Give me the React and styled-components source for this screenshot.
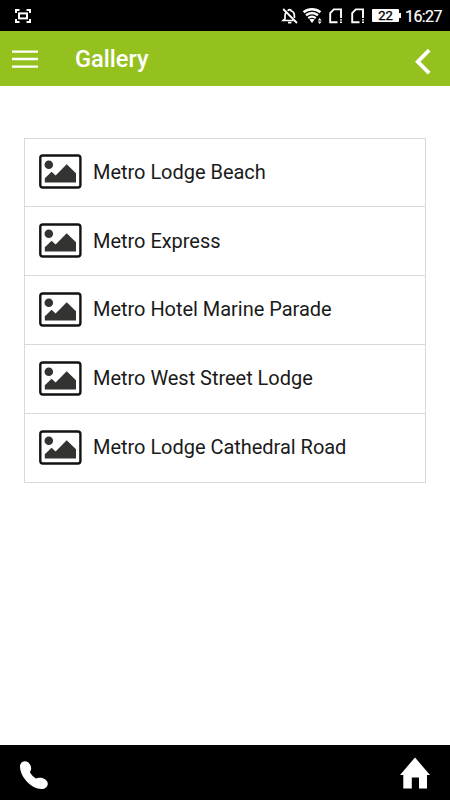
import React from "react";
import styled, { createGlobalStyle } from "styled-components";

const GlobalStyle = createGlobalStyle`
  * {
    box-sizing: border-box;
  }
  body {
    margin: 0;
    background: #ffffff;
    font-family: Roboto, sans-serif;
  }
  svg {
    display: block;
    overflow: visible;
  }
`
const SCREEN = styled.div`
  width: 450px;
  height: 800px;
  display: flex;
  flex-direction: column;
  background: #ffffff;
`
const STATUS = styled.div`
  height: 31px;
  padding: 0 8px 0 15px;
  display: flex;
  align-items: center;
  justify-content: space-between;
  background: #000000;
  color: #ffffff;
`
const STATUSICONS = styled.div`
  display: flex;
  align-items: center;
  height: 31px;
`
const SLOT = styled.div`
  margin-right: ${(props) => props.$gap}px;
`
const BATTERY = styled.div`
  width: 27px;
  height: 13px;
  border-radius: 1px;
  background: #ffffff;
  color: #000000;
  font-size: 13px;
  line-height: 14px;
  text-align: center;
  -webkit-text-stroke: 0.3px #000000;
`
const BATTERYTIP = styled.div`
  width: 2px;
  height: 5px;
  margin-right: 4px;
  background: #ffffff;
`
const CLOCK = styled.div`
  width: 37px;
  font-size: 16px;
  line-height: 18px;
  margin-top: 2px;
  white-space: nowrap;
  letter-spacing: -0.6px;
  -webkit-text-stroke: 0.2px #ffffff;
`
const HEADER = styled.div`
  height: 55px;
  padding: 0 19px 0 12px;
  display: flex;
  align-items: center;
  background: #95c11f;
  color: #ffffff;
`
const TITLE = styled.div`
  flex: 1;
  margin-left: 37px;
  font-size: 23.6px;
  font-weight: 500;
  line-height: 28px;
`
const CONTENT = styled.div`
  flex: 1;
  padding: 51.6px 24px 0;
`
const LIST = styled.div`
  border: 1px solid #d9d9d9;
`
const ROW = styled.div`
  height: 68.75px;
  padding: 0 0 1px 14px;
  display: flex;
  align-items: center;
  border-bottom: 1px solid #d9d9d9;
  &:last-child{
    height: 68px;
    border-bottom: none;
  }
`
const NAME = styled.span`
  margin-left: 11px;
  color: #1a1a1a;
  font-size: 20px;
  line-height: 24px;
  letter-spacing: -0.03px;
`
const FOOTER = styled.div`
  height: 55px;
  padding: 0 20px;
  display: flex;
  align-items: center;
  justify-content: space-between;
  background: #000000;
`

const places = [
  "Metro Lodge Beach",
  "Metro Express",
  "Metro Hotel Marine Parade",
  "Metro West Street Lodge",
  "Metro Lodge Cathedral Road",
];

function ScreenshotIcon(){
    return(
        <svg width="16" height="14" viewBox="0 0 16 14" fill="none" stroke="#fff" strokeWidth="2">
            <path d="M1 4V1H4.5M11.5 1H15V4M15 10V13H11.5M4.5 13H1V10" />
            <rect x="4" y="4.4" width="8" height="5" />
        </svg>
    )
}

function BellOffIcon(){
    return(
        <svg width="18" height="16" viewBox="0 0 18 16" fill="none" stroke="#fff" strokeWidth="1.7">
            <path d="M5.4 4.2C4.3 5.2 4 6.5 4 8V10.8L2.2 12.5H12.5M7 3C7.3 1.2 10 1.2 10.3 3C12.5 3.7 13.4 5.5 13.4 8V10" />
            <path d="M2.2 1L16 15" strokeWidth="1.8" />
            <path d="M7 14.6H10.4" strokeWidth="1.7" />
        </svg>
    )
}

function WifiIcon(){
    return(
        <svg width="20" height="16" viewBox="0 0 20 16" fill="none" stroke="#fff">
            <path d="M.6 4.2C5.6 0.2 12.4 0.2 17.4 4.2" strokeWidth="2.6" />
            <path d="M3 7.3C7 4.2 11 4.2 15 7.3" strokeWidth="2.4" />
            <path d="M5.2 10.1C8 8.1 10 8.1 12.8 10.1" strokeWidth="2.2" />
            <path d="M6.4 11.6Q9 10 11.6 11.6L9 15Z" fill="#fff" stroke="none" />
            <path d="M14.8 12.4L16.7 10L18.6 12.4ZM14.8 13.6H18.6L16.7 16Z" fill="#fff" stroke="none" />
        </svg>
    )
}

function SimIcon(){
    return(
        <svg width="14" height="16" viewBox="0 0 14 16" fill="none" stroke="#fff" strokeWidth="1.9">
            <path d="M8.5 14.2H1.2V5.2L4.8 1.4H12V10" />
            <path d="M12 11.2V12.6M12 13.4V15" strokeWidth="2" />
        </svg>
    )
}

function PictureIcon(){
    return(
        <svg width="43" height="35" viewBox="0 0 43 35">
            <rect x="1.3" y="1.5" width="40.1" height="32" rx="2.5" fill="#fff" stroke="#111311" strokeWidth="2.4" />
            <circle cx="9.8" cy="10.7" r="4.3" fill="#333331" />
            <path d="M5.8 28.6V24.3L12.6 17.8L16.6 21.5L27.7 10.2L37 19.3V28.6Z" fill="#333331" />
        </svg>
    )
}

function Gallery(){

    return(
        <>
        <GlobalStyle />
        <SCREEN>
            <STATUS>
                <ScreenshotIcon />
                <STATUSICONS>
                    <SLOT $gap={4}><BellOffIcon /></SLOT>
                    <SLOT $gap={6}><WifiIcon /></SLOT>
                    <SLOT $gap={8}><SimIcon /></SLOT>
                    <SLOT $gap={7}><SimIcon /></SLOT>
                    <BATTERY>22</BATTERY>
                    <BATTERYTIP />
                    <CLOCK>16:27</CLOCK>
                </STATUSICONS>
            </STATUS>
            <HEADER>
                <svg width="26" height="20" viewBox="0 0 26 20" stroke="#fff" strokeWidth="2.3">
                    <path d="M0 2.6H26M0 10H26M0 17.6H26" />
                </svg>
                <TITLE>Gallery</TITLE>
                <svg width="16" height="26" viewBox="0 0 16 26" fill="none" stroke="#fff" strokeWidth="3.8">
                    <path d="M14.2 4.2L2.7 15.7L14.2 27.2" />
                </svg>
            </HEADER>
            <CONTENT>
                <LIST>
                    {places.map((place) => (
                        <ROW key={place}>
                            <PictureIcon />
                            <NAME>{place}</NAME>
                        </ROW>
                    ))}
                </LIST>
            </CONTENT>
            <FOOTER>
                <svg width="28" height="30" viewBox="0 0 28 30" fill="#fff">
                    <path d="M5 3.3C8.5 3.3 11.2 7 11.2 10.5C11.2 12.5 10 13.2 10 14.2C11.2 16.6 13.5 19.2 16 20.4C17.3 20.4 18 19.8 20 19.8C24 19.8 27.8 22.5 27.8 25.7C27.8 28.7 25 31 21.5 31C11 31 0 18.5 0 8.5C0 5.5 2.2 3.3 5 3.3Z" />
                </svg>
                <svg width="30" height="32" viewBox="0 0 30 32" fill="#fff">
                    <path d="M15 .5L30 18H27V31.5H19V20.5H11.8V31.5H3.3V18H0Z" />
                </svg>
            </FOOTER>
        </SCREEN>
        </>
    )
}

export default Gallery;
